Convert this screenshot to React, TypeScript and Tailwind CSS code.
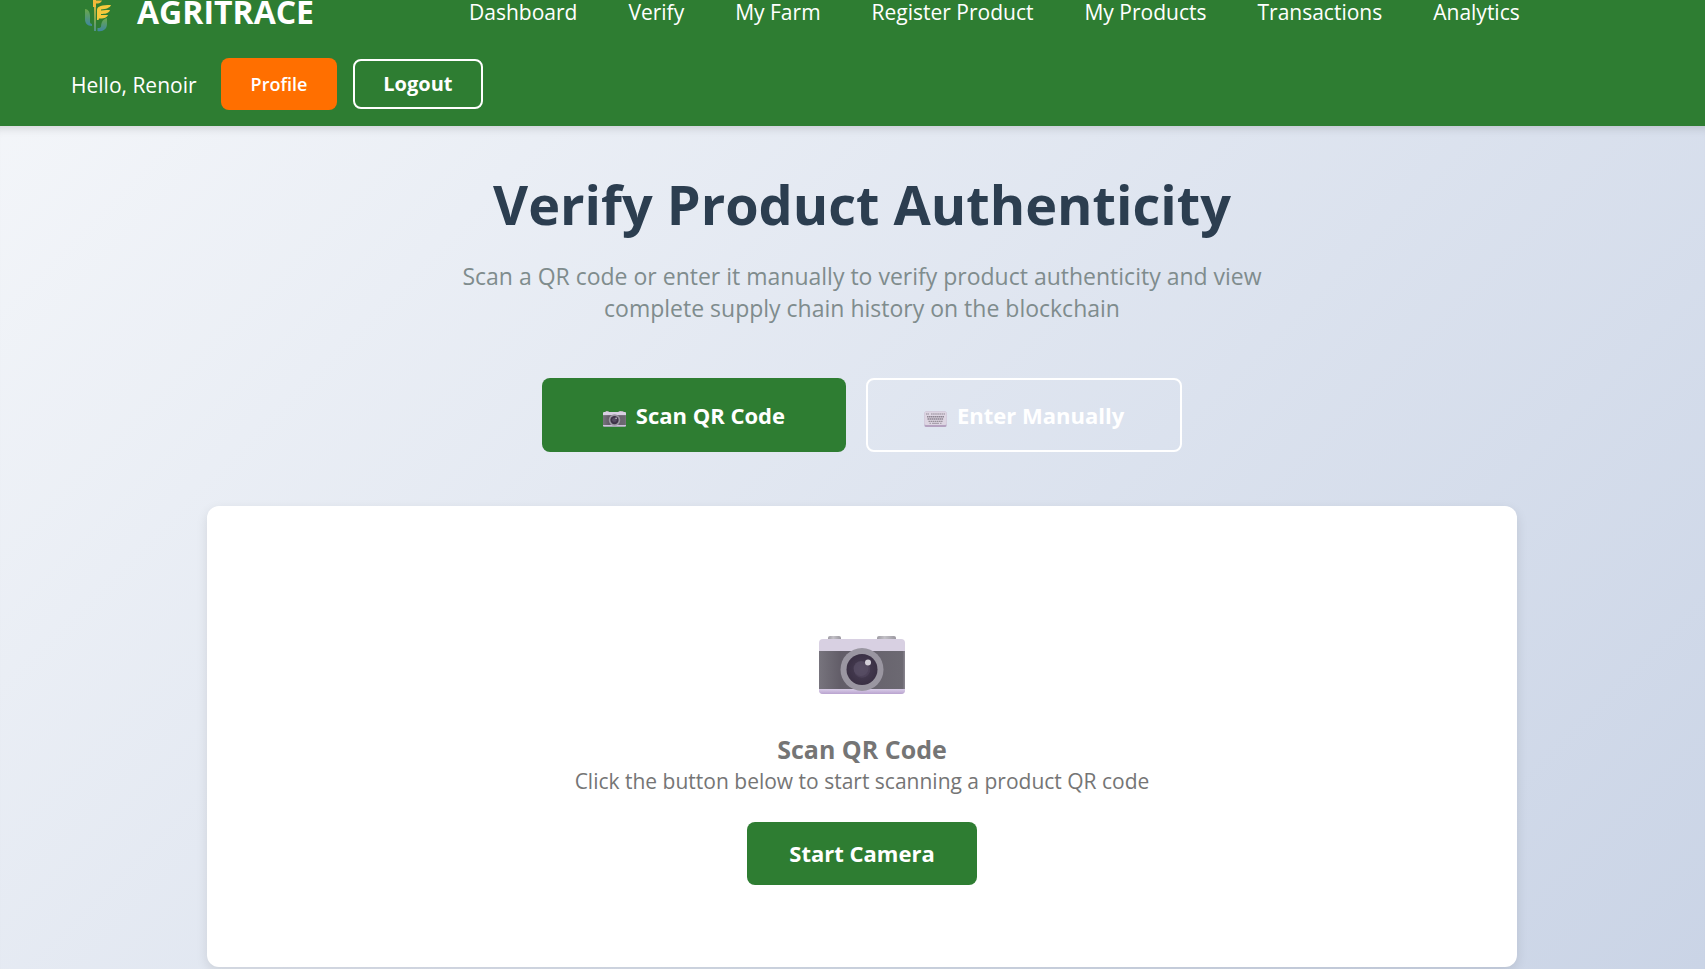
function LogoMark() {
  return (
    <svg viewBox="0 0 40 56" className="h-14 w-10 shrink-0" aria-hidden="true">
      <defs>
        <linearGradient id="leaf" x1="0" y1="0" x2="0" y2="1">
          <stop offset="0" stopColor="#6aa84a" />
          <stop offset="1" stopColor="#3f86a0" />
        </linearGradient>
        <linearGradient id="stem" gradientUnits="userSpaceOnUse" x1="0" y1="14" x2="0" y2="48">
          <stop offset="0" stopColor="#f6c93c" />
          <stop offset="0.35" stopColor="#b5b044" />
          <stop offset="0.6" stopColor="#7fa850" />
          <stop offset="1" stopColor="#4b8f8f" />
        </linearGradient>
      </defs>
      <path d="M2 25 C5 25 7 28 7 32 V38 C7 39 8 40 9 40 V42 C4 42 2 39 2 35 Z" fill="url(#leaf)" />
      <path d="M24 34 C20 35 18 38 18 43 C17 44 16 44 14.5 44 V47 C20 48 24 45 24 40 Z" fill="url(#leaf)" />
      <rect x="11" y="14" width="2" height="33" fill="url(#stem)" />
      <path d="M10 12 H19 C18 15 16 15 13 15.5 V16.5 H19 C18 19 16 19.5 13 19.5 V23 H10 Z" fill="#f2b93b" />
      <path
        d="M14 36 V26 C14 22 19 21 28 21 C27 24 23 25 18 25.5 V26.5 C22 26 25 26 27 26 C26 29.5 22 30 18 30 V31 C21 31 23 31 25 31 C24 34 20 34.5 16 34.5 L15.5 36 Z"
        fill="#f6c93c"
      />
    </svg>
  );
}

function CameraIcon({ id, className }: { id: string; className: string }) {
  return (
    <svg viewBox="0 0 86 59" className={className} aria-hidden="true">
      <defs>
        <linearGradient id={id + "-body"} x1="0" y1="0" x2="1" y2="0">
          <stop offset="0" stopColor="#77747d" />
          <stop offset="0.25" stopColor="#625d68" />
          <stop offset="0.97" stopColor="#6c6972" />
          <stop offset="1" stopColor="#8b8791" />
        </linearGradient>
        <linearGradient id={id + "-knob"} x1="0" y1="0" x2="1" y2="0">
          <stop offset="0" stopColor="#9d9aa2" />
          <stop offset="0.4" stopColor="#c3c1c7" />
          <stop offset="1" stopColor="#9a979f" />
        </linearGradient>
        <linearGradient id={id + "-base"} x1="0" y1="0" x2="0" y2="1">
          <stop offset="0" stopColor="#d9cde8" />
          <stop offset="1" stopColor="#b9a3cf" />
        </linearGradient>
        <radialGradient id={id + "-lens"} cx="0.5" cy="0.5" r="0.5">
          <stop offset="0" stopColor="#53485f" />
          <stop offset="0.5" stopColor="#4c4158" />
          <stop offset="0.55" stopColor="#41374c" />
          <stop offset="1" stopColor="#3a3044" />
        </radialGradient>
      </defs>
      <rect x="9" y="0" width="13" height="6" rx="2" fill={`url(#${id}-knob)`} />
      <rect x="58" y="0" width="19" height="6" rx="2" fill={`url(#${id}-knob)`} />
      <rect x="0" y="3" width="86" height="55" rx="4" fill="#d8d0e2" />
      <rect x="0" y="15" width="86" height="38" fill={`url(#${id}-body)`} />
      <path d="M0 53 H86 V54 A4 4 0 0 1 82 58 H4 A4 4 0 0 1 0 54 Z" fill={`url(#${id}-base)`} />
      <circle cx="43" cy="33.5" r="21.5" fill="#9a96a1" />
      <circle cx="43" cy="33.5" r="15.5" fill={`url(#${id}-lens)`} />
      <circle cx="42" cy="32.5" r="7.5" fill="#5b5267" opacity="0.55" />
      <circle cx="49" cy="26.5" r="3" fill="#d3cfd8" />
    </svg>
  );
}

function KeyboardIcon() {
  return (
    <svg viewBox="0 0 23 18" className="mt-2 h-[18px] w-[23px] shrink-0" aria-hidden="true">
      <rect x="0.5" y="1.5" width="22" height="15.5" rx="1.5" fill="#b5a2c0" />
      <rect x="0.5" y="1.5" width="22" height="13.5" rx="1.5" fill="#ddd5e2" />
      <path d="M2 4 H5 M7 4 H21" stroke="#aaa2ae" strokeWidth="1.4" strokeDasharray="1.6 0.5" />
      <path d="M3 6.8 H20 M3.5 9 H19.5" stroke="#8d8592" strokeWidth="1.5" strokeDasharray="1.6 0.4" />
      <path d="M4.5 11.3 H18.5" stroke="#979099" strokeWidth="1.3" strokeDasharray="1.6 0.5" />
      <path d="M5.5 13.3 H7 M8 13.3 H15 M16 13.3 H17.5" stroke="#aaa2ae" strokeWidth="1.2" />
    </svg>
  );
}

const links = [
  "Dashboard",
  "Verify",
  "My Farm",
  "Register Product",
  "My Products",
  "Transactions",
  "Analytics",
];

export default function App() {
  return (
    <div className="flex min-h-screen flex-col bg-linear-135 from-[#f5f7fa] to-[#cad4e6] font-['Open_Sans','Noto_Sans',sans-serif]">
      <header className="bg-[#2e7d32] text-white">
        <div className="flex h-6 items-center pl-[83px]">
          <a href="#home" className="flex h-6 items-center gap-3.5 text-[32px] leading-6 font-bold">
            <LogoMark />
            AGRITRACE
          </a>
          <nav className="ml-[155px] flex gap-[51px] text-[21px] leading-6 whitespace-nowrap">
            {links.map((label) => (
              <a key={label} href="#section">
                {label}
              </a>
            ))}
          </nav>
        </div>
        <div className="mt-[34px] flex items-center pb-4 pl-[71px]">
          <span className="pt-1 text-[21px]">Hello, Renoir</span>
          <a
            href="#profile"
            className="ml-6 flex h-[52px] items-center rounded-lg bg-[#ff6f00] px-[30px] text-lg font-semibold"
          >
            Profile
          </a>
          <button
            type="button"
            className="ml-4 h-[50px] rounded-lg border-2 border-white px-7 text-xl font-bold"
          >
            Logout
          </button>
        </div>
      </header>

      <main className="flex grow flex-col items-center pr-[188px] pl-[207px] pb-0.5 text-center shadow-[inset_0_10px_10px_-8px_rgba(0,0,0,0.15)]">
        <h1 className="mt-[43px] text-[54px] leading-[70px] font-bold text-[#2c3e50]">
          Verify Product Authenticity
        </h1>
        <p className="mt-[21px] max-w-[830px] text-[23px] leading-8 text-[#7f8c8d]">
          Scan a QR code or enter it manually to verify product authenticity and view complete
          supply chain history on the blockchain
        </p>
        <div className="mt-[54px] flex gap-5 text-[22px] font-bold text-white">
          <button
            type="button"
            className="flex h-[74px] items-center gap-2.5 rounded-lg bg-[#2e7d32] px-[61px]"
          >
            <CameraIcon id="small" className="mt-2 h-[18px] w-[23px] shrink-0" />
            Scan QR Code
          </button>
          <button
            type="button"
            className="flex h-[74px] items-center gap-2.5 rounded-lg border-2 border-white px-14"
          >
            <KeyboardIcon />
            Enter Manually
          </button>
        </div>
        <section className="mt-[54px] flex w-full grow flex-col items-center rounded-xl bg-white pb-[82px] text-[#757575] shadow-[0_4px_12px_rgba(0,0,0,0.1)]">
          <CameraIcon id="large" className="mt-[130px] h-[59px] w-[86px]" />
          <h2 className="mt-[38px] text-[25px] leading-8 font-bold">Scan QR Code</h2>
          <p className="text-[21px] leading-8">
            Click the button below to start scanning a product QR code
          </p>
          <button
            type="button"
            className="mt-[25px] h-[63px] rounded-lg bg-[#2e7d32] px-[42px] text-[22px] font-bold text-white"
          >
            Start Camera
          </button>
        </section>
      </main>
    </div>
  );
}
